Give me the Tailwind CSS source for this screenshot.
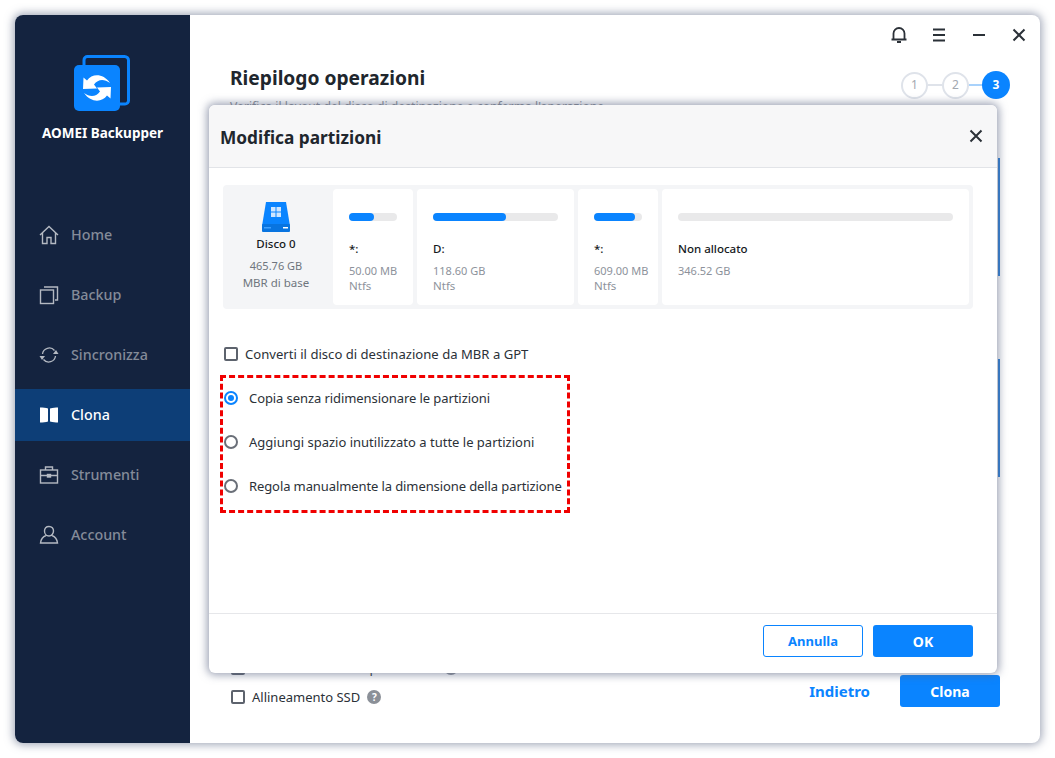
<!DOCTYPE html>
<html lang="en">
<head>
  <meta charset="UTF-8" />
  <title>AOMEI Backupper</title>
  <script src="https://cdn.jsdelivr.net/npm/@tailwindcss/browser@4"></script>
</head>
<body class="bg-white font-['Noto_Sans',sans-serif] w-[1055px] h-[758px] overflow-hidden">
  <div class="pt-[15px] pl-[15px]">
    <!-- Window -->
    <div class="relative flex w-[1025px] h-[728px] rounded-[8px] overflow-hidden bg-white shadow-[0_0_8px_2px_rgba(90,100,130,0.55)]">
      <!-- Sidebar -->
      <aside class="w-[175px] shrink-0 bg-[#14233f] flex flex-col">
        <div class="flex flex-col items-center pt-[40px] h-[190px]">
          <svg class="w-[56px] h-[56px] -ml-[1px]" viewBox="0 0 56 56">
            <path d="M10 10V5a3.500 3.500 0 0 1 3.500-3.500h37a4 4 0 0 1 4 4v40a3.500 3.500 0 0 1-3.500 3.500H46" fill="none" stroke="#0a84ff" stroke-width="3"/>
            <rect x="0" y="10" width="46" height="46" rx="5" fill="#0a84ff"/>
            <path d="M9.500 22.500L13 25.500C18 18.500 29 18 36 28C30 23.500 24 24 20 29.500L23 33.500L9 34Z" fill="#fff"/>
            <path d="M9.500 22.500L13 25.500C18 18.500 29 18 36 28C30 23.500 24 24 20 29.500L23 33.500L9 34Z" fill="#fff" transform="rotate(180 23 33)"/>
          </svg>
          <div class="mt-[12px] text-[13.5px] leading-[20px] font-bold text-white">AOMEI Backupper</div>
        </div>
        <nav class="flex flex-col mt-[4px]">
          <div class="flex items-center h-[52px] mb-[8px] pl-[24px] text-[#848b99]">
            <svg class="w-[20px] h-[20px] mr-[12px]" viewBox="0 0 20 20" fill="none" stroke="#b4b9c2" stroke-width="1.400"><path d="M1 10 10 1.500 19 10M3.500 8v10.500h4.500v-6h4v6h4.500V8"/></svg>
            <span class="pb-[1px] text-[14.3px] font-medium">Home</span>
          </div>
          <div class="flex items-center h-[52px] mb-[8px] pl-[24px] text-[#848b99]">
            <svg class="w-[20px] h-[20px] mr-[12px]" viewBox="0 0 20 20" fill="none" stroke="#b4b9c2" stroke-width="1.400"><rect x="1.500" y="5" width="13" height="13.500"/><path d="M5 2h13.500v13H16"/></svg>
            <span class="pb-[1px] text-[14.3px] font-medium">Backup</span>
          </div>
          <div class="flex items-center h-[52px] mb-[8px] pl-[24px] text-[#848b99]">
            <svg class="w-[20px] h-[20px] mr-[12px]" viewBox="0 0 20 20" fill="none" stroke="#b4b9c2" stroke-width="1.300"><path d="M3.500 9a6.800 6.800 0 0 1 12-3.500M16.500 11a6.800 6.800 0 0 1-12 3.500"/><path d="M14 9h5.500L17 5zM6 11H.5L3 15z" fill="#b4b9c2" stroke="none"/></svg>
            <span class="pb-[1px] text-[14.3px] font-medium">Sincronizza</span>
          </div>
          <div class="flex items-center h-[52px] mb-[8px] pl-[24px] bg-[#0d3e77] text-white">
            <svg class="w-[20px] h-[20px] mr-[12px]" viewBox="0 0 20 20" fill="#fff"><path d="M1 2.500c3 0 6 .3 8 1v13c-2 .7-5 1-8 1zM19 2.500c-2.500 0-5 .3-8 1v13c3 .7 5.500 1 8 1z"/></svg>
            <span class="pb-[1px] text-[14.3px] font-medium">Clona</span>
          </div>
          <div class="flex items-center h-[52px] mb-[8px] pl-[24px] text-[#848b99]">
            <svg class="w-[20px] h-[20px] mr-[12px]" viewBox="0 0 20 20" fill="none" stroke="#b4b9c2" stroke-width="1.400"><rect x="1.500" y="5" width="17" height="13"/><path d="M6.500 5V2h7v3M1.500 10.500h17"/><rect x="8.500" y="9.500" width="3" height="2.500" fill="#b4b9c2"/></svg>
            <span class="pb-[1px] text-[14.3px] font-medium">Strumenti</span>
          </div>
          <div class="flex items-center h-[52px] pl-[24px] text-[#848b99]">
            <svg class="w-[20px] h-[20px] mr-[12px]" viewBox="0 0 20 20" fill="none" stroke="#b4b9c2" stroke-width="1.400"><path d="M10 1.500c3 0 4.500 2 4.500 4.500s-2 5-4.500 5-4.500-2-4.500-5 1.500-4.500 4.500-4.500zM7 10.500c-3 1-5 3.500-5.500 7.500h17c-.5-4-2.500-6.500-5.500-7.500"/></svg>
            <span class="pb-[1px] text-[14.3px] font-medium">Account</span>
          </div>
        </nav>
      </aside>

      <!-- Main content behind the dialog -->
      <main class="flex-1 flex flex-col">
        <div class="flex justify-end items-center h-[39px] pr-[12px] gap-[22px] text-[#2b3138]">
          <svg class="w-[18px] h-[18px]" viewBox="0 0 18 18" fill="none" stroke="currentColor" stroke-width="1.800"><path d="M3.500 13V7.500a5.500 5.500 0 0 1 11 0V13M1.500 13.500h15"/><path d="M7 16h4"/></svg>
          <svg class="w-[18px] h-[18px]" viewBox="0 0 18 18" stroke="currentColor" stroke-width="2"><path d="M3 3.500h12M3 9h12M3 14.500h12"/></svg>
          <svg class="w-[18px] h-[18px]" viewBox="0 0 18 18" stroke="currentColor" stroke-width="2"><path d="M3 9h12"/></svg>
          <svg class="w-[18px] h-[18px]" viewBox="0 0 18 18" stroke="currentColor" stroke-width="2"><path d="M3.500 3.500l11 11M14.500 3.500l-11 11"/></svg>
        </div>
        <div class="flex justify-between pl-[40px] pr-[30px] pt-[10px]">
          <div>
            <h1 class="text-[19.2px] leading-[28px] font-bold text-[#20262d]">Riepilogo operazioni</h1>
            <p class="mt-[7px] text-[12.2px] leading-[16px] text-[#8a8f98]">Verifica il layout del disco di destinazione e conferma l'operazione</p>
          </div>
          <div class="flex items-center h-[28px] mt-[7px]">
            <div class="w-[27px] h-[27px] rounded-full border-2 border-[#dfe3ea] flex items-center justify-center text-[12px] text-[#a3a8b0]">1</div>
            <div class="w-[14px] h-[2px] bg-[#dfe3ea]"></div>
            <div class="w-[27px] h-[27px] rounded-full border-2 border-[#dfe3ea] flex items-center justify-center text-[12px] text-[#a3a8b0]">2</div>
            <div class="w-[13px] h-[2px] bg-[#a9d2fb]"></div>
            <div class="w-[28px] h-[28px] rounded-full bg-[#0a84ff] flex items-center justify-center text-[12px] font-bold text-white">3</div>
          </div>
        </div>
        <div class="flex flex-col gap-[83px] mt-[43px] mx-[40px]">
          <div class="h-[118px] border-r-2 border-[#2a7fd8]"></div>
          <div class="h-[118px] border-r-2 border-[#2a7fd8]"></div>
        </div>
        <div class="flex justify-between items-end mt-auto pl-[41px] pr-[40px] pb-[36px]">
          <div class="flex flex-col gap-[9px]">
            <div class="flex items-center gap-[7px] text-[13px] leading-[20px] text-[#2b3138]">
              <span class="w-[14px] h-[14px] rounded-[2px] border-2 border-[#5d636d]"></span>
              <span>Clonazione settore per settore</span>
              <span class="w-[14px] h-[14px] rounded-full bg-[#8b9098]"></span>
            </div>
            <div class="flex items-center gap-[7px] text-[13px] leading-[20px] text-[#2b3138]">
              <span class="w-[14px] h-[14px] rounded-[2px] border-2 border-[#5d636d]"></span>
              <span>Allineamento SSD</span>
              <span class="w-[14px] h-[14px] rounded-full bg-[#8b9098] flex items-center justify-center text-[10px] font-bold text-white">?</span>
            </div>
          </div>
          <div class="flex items-center gap-[30px]">
            <span class="text-[15px] font-bold text-[#0a84ff]">Indietro</span>
            <button class="w-[100px] h-[32px] rounded-[3px] bg-[#0a84ff] text-[14px] font-bold text-white">Clona</button>
          </div>
        </div>
      </main>

      <!-- Dialog -->
      <div class="absolute left-[194px] top-[90px] w-[788px] h-[568px] rounded-[6px] bg-white flex flex-col overflow-hidden shadow-[0_0_9px_2px_rgba(90,100,130,0.6)]">
        <div class="h-[63px] shrink-0 bg-[#f7f7f8] border-b border-[#e2e4e8] flex items-center justify-between pl-[11px] pr-[13px]">
          <h2 class="mt-[3px] text-[17.3px] font-bold text-[#20262d]">Modifica partizioni</h2>
          <svg class="w-[16px] h-[16px] text-[#2b3138]" viewBox="0 0 16 16" stroke="currentColor" stroke-width="2"><path d="M2.500 2.500l11 11M13.500 2.500l-11 11"/></svg>
        </div>
        <div class="flex-1 pl-[14px] pt-[17px]">
          <!-- Disk map -->
          <div class="flex gap-[4px] w-[750px] h-[124px] p-[4px] rounded-[4px] bg-[#f4f5f7]">
            <div class="w-[102px] shrink-0 flex flex-col items-center pt-[13px] pr-[4px]">
              <svg class="w-[28px] h-[30px]" viewBox="0 0 28 30">
                <path d="M4 0h20l4 24H0z" fill="#0a84ff"/>
                <rect x="0" y="22" width="28" height="8" rx="1" fill="#0874e0"/>
                <path d="M9 5h4.500v4.500H9zM14.500 5H19v4.500h-4.500zM9 10.500h4.500V15H9zM14.500 10.500H19V15h-4.500z" fill="#cfe6ff"/>
                <rect x="21" y="25" width="5" height="1.500" fill="#fff"/>
                <rect x="2" y="25" width="7" height="1.500" fill="#3ea0ff"/>
              </svg>
              <div class="mt-[3px] text-[11.5px] leading-[18px] font-medium text-[#16191d]">Disco 0</div>
              <div class="mt-[5px] text-[11.5px] leading-[16.5px] text-[#6f757e] text-center whitespace-nowrap"><span class="text-[11px]">465.76 GB</span><br>MBR di base</div>
            </div>
            <div class="w-[80px] shrink-0 rounded-[4px] bg-white px-[16px] pt-[24px]">
              <div class="h-[8px] rounded-full bg-[#e9e9ea]"><div class="h-full rounded-full bg-[#0a84ff]" style="width:52%"></div></div>
              <div class="mt-[19px] text-[11.5px] leading-[18px] font-medium text-[#16191d]">*:</div>
              <div class="mt-[5px] text-[11.5px] leading-[15px] text-[#8d929b] whitespace-nowrap"><span class="text-[11px]">50.00 MB</span><br>Ntfs</div>
            </div>
            <div class="w-[157px] shrink-0 rounded-[4px] bg-white px-[16px] pt-[24px]">
              <div class="h-[8px] rounded-full bg-[#e9e9ea]"><div class="h-full rounded-full bg-[#0a84ff]" style="width:58%"></div></div>
              <div class="mt-[19px] text-[11.5px] leading-[18px] font-medium text-[#16191d]">D:</div>
              <div class="mt-[5px] text-[11.5px] leading-[15px] text-[#8d929b] whitespace-nowrap"><span class="text-[11px]">118.60 GB</span><br>Ntfs</div>
            </div>
            <div class="w-[80px] shrink-0 rounded-[4px] bg-white px-[16px] pt-[24px]">
              <div class="h-[8px] rounded-full bg-[#e9e9ea]"><div class="h-full rounded-full bg-[#0a84ff]" style="width:85%"></div></div>
              <div class="mt-[19px] text-[11.5px] leading-[18px] font-medium text-[#16191d]">*:</div>
              <div class="mt-[5px] text-[11.5px] leading-[15px] text-[#8d929b] whitespace-nowrap"><span class="text-[11px]">609.00 MB</span><br>Ntfs</div>
            </div>
            <div class="flex-1 rounded-[4px] bg-white px-[16px] pt-[24px]">
              <div class="h-[8px] rounded-full bg-[#e9e9ea]"></div>
              <div class="mt-[19px] text-[11.5px] leading-[18px] font-medium text-[#16191d]">Non allocato</div>
              <div class="mt-[5px] text-[11px] leading-[15px] text-[#8d929b]">346.52 GB</div>
            </div>
          </div>
          <!-- Options -->
          <div class="flex items-center gap-[7px] mt-[35px] ml-[1px] text-[13.1px] leading-[20px] text-[#2b3138]">
            <span class="w-[14px] h-[14px] rounded-[2px] border-2 border-[#5d636d]"></span>
            <span>Converti il disco di destinazione da MBR a GPT</span>
          </div>
          <div class="mt-[11px] -ml-[3px] w-[350px] h-[138px] border-[3px] border-dashed border-[#f00000] flex flex-col gap-[24px] pl-[1px] pt-[10px] text-[13px] leading-[20px] text-[#2b3138]">
            <div class="flex items-center gap-[11px]">
              <span class="w-[14px] h-[14px] shrink-0 rounded-full border-2 border-[#0a84ff] flex items-center justify-center"><span class="w-[6px] h-[6px] rounded-full bg-[#0a84ff]"></span></span>
              <span class="tracking-[-0.08px]">Copia senza ridimensionare le partizioni</span>
            </div>
            <div class="flex items-center gap-[11px]">
              <span class="w-[14px] h-[14px] shrink-0 rounded-full border-2 border-[#6a6f78]"></span>
              <span>Aggiungi spazio inutilizzato a tutte le partizioni</span>
            </div>
            <div class="flex items-center gap-[11px]">
              <span class="w-[14px] h-[14px] shrink-0 rounded-full border-2 border-[#6a6f78]"></span>
              <span class="whitespace-nowrap tracking-[-0.1px]">Regola manualmente la dimensione della partizione</span>
            </div>
          </div>
        </div>
        <div class="h-[60px] shrink-0 border-t border-[#e6e7ea] flex items-start justify-end gap-[10px] pr-[24px] pt-[11px]">
          <button class="w-[100px] h-[32px] pt-[2px] rounded-[3px] border border-[#0a84ff] text-[13px] font-bold text-[#0a84ff]">Annulla</button>
          <button class="w-[100px] h-[32px] rounded-[3px] bg-[#0a84ff] text-[14px] font-bold text-white">OK</button>
        </div>
      </div>
    </div>
  </div>
</body>
</html>
